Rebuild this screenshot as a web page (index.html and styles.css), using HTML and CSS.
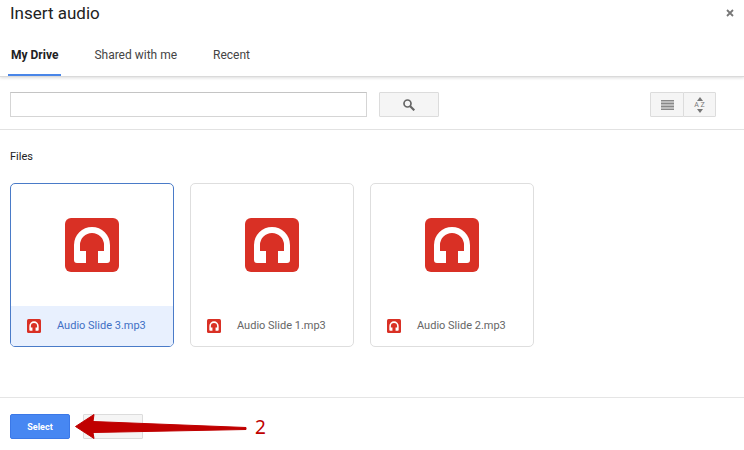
FILE: index.html
```html
<!DOCTYPE html>
<html lang="en">
<head>
<meta charset="utf-8">
<meta name="viewport" content="width=device-width, initial-scale=1">
<title>Insert audio</title>
<link rel="stylesheet" href="styles.css">
</head>
<body>
<svg width="0" height="0" class="defs" aria-hidden="true">
  <symbol id="audio" viewBox="0 0 54 54">
    <rect width="54" height="54" rx="6" fill="#d93025"/>
    <path fill="#fff" d="M9 27a18 18 0 0 1 36 0v15a3 3 0 0 1-3 3h-9V33h6v-6a12 12 0 0 0-24 0v6h6v12h-9a3 3 0 0 1-3-3z"/>
  </symbol>
</svg>
<main class="dialog">
  <header class="header">
    <div class="title-row">
      <h1 class="title">Insert audio</h1>
      <button class="close" type="button" aria-label="Close">
        <svg width="8" height="8" viewBox="0 0 8 8"><path d="M1 1l6 6M7 1L1 7" stroke="#777" stroke-width="1.8"/></svg>
      </button>
    </div>
    <nav class="tabs">
      <a class="tab active" href="#drive">My Drive</a>
      <a class="tab" href="#shared">Shared with me</a>
      <a class="tab" href="#recent">Recent</a>
    </nav>
  </header>
  <form class="toolbar">
    <input class="search" type="text" aria-label="Search files">
    <button class="button search-button" type="button" aria-label="Search">
      <svg width="12" height="12" viewBox="0 0 12 12" fill="none" stroke="#666"><circle cx="4.5" cy="4.5" r="3.5" stroke-width="1.7"/><path d="M7 7l4.3 4.3" stroke-width="2.2"/></svg>
    </button>
    <div class="view">
      <button class="button view-button" type="button" aria-label="List view">
        <svg width="13" height="10" viewBox="0 0 13 10"><path fill="#bdbdbd" d="M0 0h13v10H0z"/><path d="M0 .5h13M0 3.5h13M0 6.5h13M0 9.5h13" stroke="#888"/></svg>
      </button>
      <button class="button view-button sort" type="button" aria-label="Sort A to Z">
        <span class="sort-mark">
          <svg width="6" height="4" viewBox="0 0 6 4"><path fill="#777" d="M0 4l3-4 3 4z"/></svg>
          <span class="sort-text">A Z</span>
          <svg width="6" height="4" viewBox="0 0 6 4"><path fill="#777" d="M0 0l3 4 3-4z"/></svg>
        </span>
      </button>
    </div>
  </form>
  <section class="files">
    <h2 class="heading">Files</h2>
    <div class="grid">
      <button class="card selected" type="button" aria-pressed="true">
        <span class="preview"><svg class="large"><use href="#audio"/></svg></span>
        <span class="caption"><svg class="small"><use href="#audio"/></svg>Audio Slide 3.mp3</span>
      </button>
      <button class="card" type="button" aria-pressed="false">
        <span class="preview"><svg class="large"><use href="#audio"/></svg></span>
        <span class="caption"><svg class="small"><use href="#audio"/></svg>Audio Slide 1.mp3</span>
      </button>
      <button class="card" type="button" aria-pressed="false">
        <span class="preview"><svg class="large"><use href="#audio"/></svg></span>
        <span class="caption"><svg class="small"><use href="#audio"/></svg>Audio Slide 2.mp3</span>
      </button>
    </div>
  </section>
  <footer class="footer">
    <button class="button primary" type="button">Select</button>
    <button class="button" type="button">Cancel</button>
    <div class="callout">
      <svg width="172" height="26" viewBox="0 0 172 26" aria-hidden="true"><path fill="#c00000" stroke="#c00000" stroke-linejoin="round" d="M.5 12.500L19 .5 18 7.500 171 13.500v2L18 18.500l1 6z"/></svg>
      <span>2</span>
    </div>
  </footer>
</main>
</body>
</html>
```
FILE: styles.css
```css
* { box-sizing: border-box; }
body {
  margin: 0;
  background: #fff;
  color: #222;
  font: 12px/16px Roboto, "Liberation Sans", sans-serif;
}
button, input { font: inherit; margin: 0; }
svg { display: block; }
.defs { position: absolute; }
.header {
  padding: 0 8px;
  border-bottom: 1px solid #dadada;
  box-shadow: 0 1px 3px rgba(0, 0, 0, .14);
}
.title-row {
  display: flex;
  justify-content: space-between;
  align-items: center;
  height: 26px;
  padding-left: 2px;
}
.title { margin: 0; font-size: 17px; line-height: 26px; font-weight: 400; }
.close { padding: 2px; border: 0; background: none; }
.tabs { display: flex; gap: 30px; }
.tab {
  height: 50px;
  padding: 0 3px;
  border-bottom: 2px solid transparent;
  color: #444;
  line-height: 58px;
  text-decoration: none;
}
.tab.active { border-color: #4a86e8; color: #222; font-weight: 700; }
.toolbar {
  display: flex;
  align-items: center;
  gap: 12px;
  padding: 15px 28px 12px 10px;
  border-bottom: 1px solid #e2e2e2;
}
.search {
  flex: 0 1 357px;
  min-width: 0;
  height: 25px;
  border: 1px solid #d5d5d5;
  border-top-color: #c4c4c4;
}
.button {
  display: flex;
  align-items: center;
  justify-content: center;
  width: 60px;
  height: 25px;
  padding: 0;
  border: 1px solid #dcdcdc;
  border-radius: 1px;
  background: #f5f5f5;
  color: #555;
  font-size: 9px;
  font-weight: 700;
}
.view { display: flex; margin-left: auto; }
.view-button { width: 34px; }
.sort { width: 33px; margin-left: -1px; }
.sort-mark { display: flex; flex-direction: column; align-items: center; }
.sort-text { color: #777; font-size: 7px; line-height: 8px; font-weight: 400; }
.files { padding: 19px 10px 50px; }
.heading { margin: 0 0 18px; font-size: 11px; line-height: 16px; font-weight: 400; }
.grid { display: grid; grid-template-columns: repeat(auto-fill, 164px); gap: 16px; }
.card {
  display: flex;
  flex-direction: column;
  padding: 0;
  overflow: hidden;
  border: 1px solid #dedede;
  border-radius: 5px;
  background: #fff;
  color: #666;
  font-size: 11px;
}
.preview {
  display: flex;
  width: 100%;
  height: 122px;
  align-items: center;
  justify-content: center;
}
.large { width: 54px; height: 54px; }
.small { width: 14px; height: 14px; }
.caption {
  display: flex;
  width: 100%;
  height: 40px;
  align-items: center;
  gap: 16px;
  padding-left: 16px;
}
.selected { border-color: #4a7bc8; color: #3f6fc4; }
.selected .caption { background: #e8f0fe; }
.footer {
  position: relative;
  display: flex;
  gap: 13px;
  padding: 16px 10px 12px;
  border-top: 1px solid #e5e5e5;
}
.primary { border-color: #3b78e7; border-radius: 2px; background: #4787f2; color: #fff; }
.callout {
  position: absolute;
  top: 16px;
  left: 75px;
  display: flex;
  align-items: center;
  gap: 8px;
  color: #c00000;
  font: 19px/26px "Noto Sans", sans-serif;
}
```
